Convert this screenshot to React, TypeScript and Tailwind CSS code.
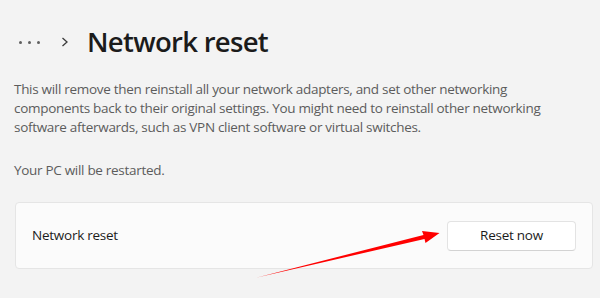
import React from 'react';

// ── Network reset settings page ─────────────────────────────────────────────
const font = "font-['Open_Sans','Noto_Sans',sans-serif]";

const Arrow: React.FC = () => (
  <svg className="pointer-events-none absolute inset-0" width="600" height="298" viewBox="0 0 600 298">
    <polygon
      points="257,277.5 423.5,235 422,231 439.5,233 425.5,243 424.5,239"
      fill="#ff0000"
    />
  </svg>
);

export default function App() {
  return (
    <div className={`relative w-[600px] h-[298px] overflow-hidden bg-[#f3f3f3] ${font}`}>
      {/* Breadcrumb header */}
      <div className="flex items-center h-[36px] mt-[24px] pl-[19px]">
        <div className="flex items-center gap-[6px]">
          <span className="w-[3px] h-[3px] rounded-full bg-[#5f5f5f]" />
          <span className="w-[3px] h-[3px] rounded-full bg-[#5f5f5f]" />
          <span className="w-[3px] h-[3px] rounded-full bg-[#5f5f5f]" />
        </div>
        <svg className="ml-[21px]" width="8" height="10" viewBox="0 0 8 10">
          <path d="M1.5 1 L6 5 L1.5 9" fill="none" stroke="#3b3b3b" strokeWidth="1.3" />
        </svg>
        <h1 className="ml-[18px] text-[27.5px] leading-[36px] font-semibold tracking-[-0.7px] text-[#1b1b1b]">
          Network reset
        </h1>
      </div>

      {/* Description */}
      <div className="mt-[20px] px-[14px] text-[13.5px] leading-[19px] text-[#5c5c5c] whitespace-nowrap tracking-[-0.3px]">
        <p>This will remove then reinstall all your network adapters, and set other networking</p>
        <p>components back to their original settings. You might need to reinstall other networking</p>
        <p>software afterwards, such as VPN client software or virtual switches.</p>
        <p className="mt-[24px]">Your PC will be restarted.</p>
      </div>

      {/* Action card */}
      <div className="mt-[22px] ml-[15px] w-[578px] h-[67px] flex items-center justify-between px-[16px] rounded-[4px] border border-[#e5e5e5] bg-[#fbfbfb]">
        <span className="text-[13.5px] text-[#1b1b1b] tracking-[-0.25px]">Network reset</span>
        <button
          type="button"
          className="w-[129px] h-[30px] rounded-[4px] border border-[#e3e3e3] border-b-[#d3d3d3] bg-white text-[13.5px] text-[#1b1b1b] tracking-[-0.25px]"
        >
          Reset now
        </button>
      </div>

      <Arrow />
    </div>
  );
}
